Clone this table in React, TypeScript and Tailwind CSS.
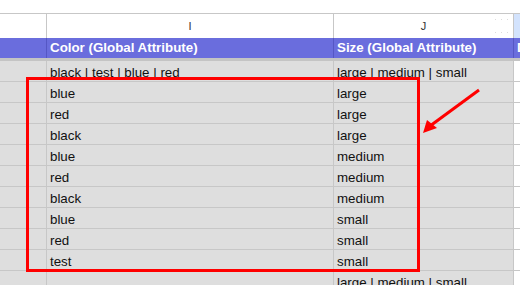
const rows: [string, string][] = [
  ["black | test | blue | red", "large | medium | small"],
  ["blue", "large"],
  ["red", "large"],
  ["black", "large"],
  ["blue", "medium"],
  ["red", "medium"],
  ["black", "medium"],
  ["blue", "small"],
  ["red", "small"],
  ["test", "small"],
  ["", "large | medium | small"],
];

const cols = "grid grid-cols-[47px_287px_180px_1fr]";

export default function App() {
  return (
    <div className="relative h-[285px] w-[520px] overflow-hidden bg-white font-['Liberation_Sans',Arial,sans-serif] text-[13.33px] text-[#111]">
      <div className="h-[14px] border-b border-[#c7c7c7]" />

      {/* column letters */}
      <div className={`${cols} h-[24px] text-[11px] text-[#333]`}>
        <div className="border-r border-[#c7c7c7]" />
        <div className="flex items-center justify-center border-r border-[#c7c7c7]">I</div>
        <div className="relative flex items-center justify-center border-r border-[#c7c7c7]">
          J
          <div className="absolute right-[5px] top-[5px] grid grid-cols-3 gap-x-[5px] gap-y-[12px]">
            {Array.from({ length: 6 }).map((_, i) => (
              <span key={i} className="h-[1px] w-[1px] bg-[#dcdcdc]" />
            ))}
          </div>
        </div>
        <div className="bg-[#d3e3fd]" />
      </div>

      {/* header */}
      <div className={`${cols} h-[20px] bg-[#6a6ddd] font-bold leading-[20px] text-white`}>
        <div className="border-r border-[#5557c4]" />
        <div className="overflow-hidden whitespace-nowrap border-r border-[#5557c4] pl-[3px]">Color (Global Attribute)</div>
        <div className="overflow-hidden whitespace-nowrap border-r border-[#5557c4] pl-[3px]">Size (Global Attribute)</div>
        <div className="overflow-hidden whitespace-nowrap pl-[3px]">Description</div>
      </div>
      <div className="h-[3px] bg-[#c4c4c4]" />

      {rows.map(([color, size], i) => (
        <div key={i} className={`${cols} h-[21px] border-b border-[#c7c7c7] leading-[20px]`}>
          <div className="border-r border-[#c7c7c7] bg-[#dedede]" />
          <div className="overflow-hidden whitespace-nowrap border-r border-[#c7c7c7] bg-[#dedede] pl-[3px] pt-[2px]">{color}</div>
          <div className="overflow-hidden whitespace-nowrap border-r border-[#c7c7c7] bg-[#dedede] pl-[3px] pt-[2px]">{size}</div>
          <div className="bg-white" />
        </div>
      ))}

      {/* annotation */}
      <div className="absolute left-[26px] top-[77px] h-[195px] w-[394px] border-[3px] border-[#ff0000]" />
      <svg className="absolute left-0 top-0" width="520" height="285">
        <line x1="479" y1="90" x2="430" y2="126" stroke="#ff0000" strokeWidth="3" />
        <polygon points="423,133 427,120 437,128" fill="#ff0000" />
      </svg>
    </div>
  );
}
